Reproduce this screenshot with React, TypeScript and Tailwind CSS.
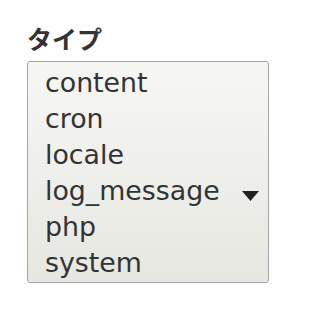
import React from 'react';

const options = ['content', 'cron', 'locale', 'log_message', 'php', 'system'];

const App: React.FC = () => {
    return (
        <div className="w-[282px] h-[310px] bg-white pt-[21px] pl-[27px]" style={{ fontFamily: '"DejaVu Sans", "Noto Sans CJK JP", sans-serif' }}>
            <label className="block text-[25px] leading-[34px] font-bold text-[#333] mb-[6px]" style={{ fontFamily: '"Noto Sans CJK JP", sans-serif' }}>
                タイプ
            </label>
            <div className="relative w-[242px] h-[222px] border border-[#a6a6a6] rounded-[3px] bg-gradient-to-b from-[#f6f6f3] to-[#e7e7e2] pt-[3px] pl-[17px]">
                {options.map((opt) => (
                    <div key={opt} className="text-[26.8px] leading-[36px] text-[#333]">
                        {opt}
                    </div>
                ))}
                <svg className="absolute left-[214px] top-[129px]" width="17" height="10" viewBox="0 0 17 10">
                    <path d="M0 0h17L8.5 10z" fill="#222" />
                </svg>
            </div>
        </div>
    );
};

export default App;
